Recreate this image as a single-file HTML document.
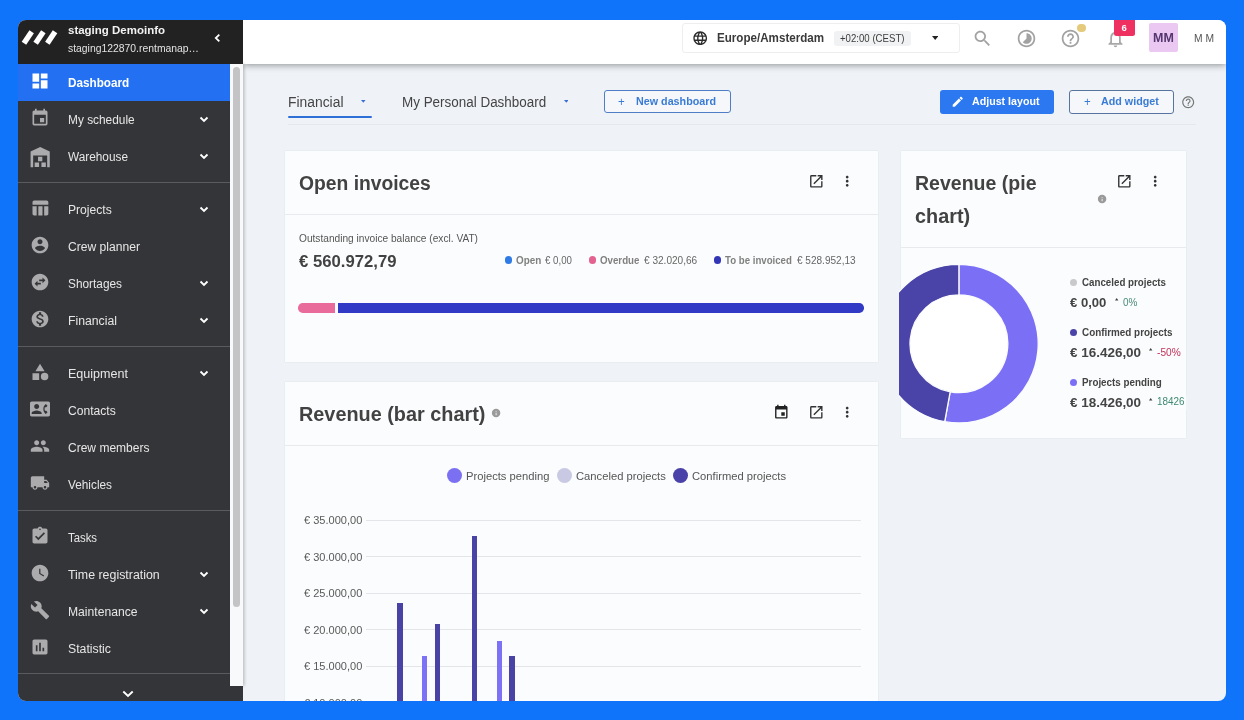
<!DOCTYPE html>
<html>
<head>
<meta charset="utf-8">
<style>
*{box-sizing:border-box;margin:0;padding:0}
html,body{width:1244px;height:720px;overflow:hidden}
body{background:#0f74fa;font-family:"Liberation Sans",sans-serif;position:relative;color:#333}
#win{position:absolute;left:18px;top:19.8px;width:1208px;height:681px;border-radius:8px;overflow:hidden;background:#eff3f7}
#pg{will-change:transform;position:absolute;left:-18px;top:-19.8px;width:1244px;height:720px}
.abs{position:absolute}
.t{position:absolute;white-space:nowrap;line-height:1;transform-origin:0 50%;transform:scaleX(var(--k,1))}
/* sidebar */
#sb{position:absolute;left:18px;top:64px;width:211.5px;height:640px;background:#343538}
#sbh{position:absolute;left:18px;top:20px;width:225px;height:44px;background:#222222}
#sbf{position:absolute;left:18px;top:685.8px;width:225.3px;height:20px;background:#343538}
#track{position:absolute;left:229.5px;top:64px;width:13.8px;height:621.8px;background:#f7f9fb;box-shadow:1.5px 0 3px rgba(0,0,0,.22)}
#thumb{position:absolute;left:233.1px;top:66.8px;width:7.4px;height:540px;background:#c4c4c6;border-radius:4px}
.nav{position:absolute;left:18px;width:211.5px;height:37px}
.nav .t{left:50px;top:13px;font-size:12.3px;color:#e6e6e6}
.nav svg.ic{overflow:visible;position:absolute;left:11.6px;top:6.5px;width:20px;height:20px;fill:#ababad}
.nav svg.ch{position:absolute;left:180.9px;top:15.1px;width:10px;height:7px;fill:none;stroke:#fff;stroke-width:1.9}
.nav.act{background:#2371f2}
.nav.act .t{font-weight:bold;color:#fff}
.nav.act svg.ic{fill:#fff}
.div{position:absolute;left:18px;width:211.5px;height:1px;background:#5a5b5e}
/* topbar */
#tb{position:absolute;left:243px;top:20px;width:983px;height:44px;background:#fff;box-shadow:0 1px 7px rgba(0,0,0,.42)}
/* cards */
.card{position:absolute;background:#fbfcfd;box-shadow:0 0 2px rgba(0,0,0,.12)}
.hr{position:absolute;height:1px;background:#e6e8eb}
</style>
<style id="fit">
#n0{--k:0.9528}
#n1{--k:0.9660}
#n2{--k:0.9610}
#n3{--k:0.9849}
#n4{--k:0.9844}
#n5{--k:0.9632}
#n6{--k:0.9956}
#n7{--k:1.0205}
#n8{--k:0.9839}
#n9{--k:0.9777}
#n10{--k:0.9604}
#n11{--k:0.9225}
#n12{--k:1.0069}
#n13{--k:0.9869}
#n14{--k:0.9985}
#h1{--k:1.0442}
#h2{--k:0.9886}
#tz1{--k:0.9150}
#tz2{--k:0.9171}
#mm1{--k:0.9912}
#mm2{--k:0.9350}
#tab1{--k:0.9905}
#tab2{--k:0.9601}
#nd0{--k:0.9550}
#nd1{--k:0.9602}
#al{--k:0.9432}
#aw0{--k:0.9550}
#aw1{--k:0.9495}
#c1t{--k:0.9840}
#c1a{--k:0.9766}
#c1b{--k:0.9886}
#l1a{--k:0.9609}
#l1b{--k:0.9392}
#l2a{--k:0.9430}
#l2b{--k:0.9778}
#l3a{--k:0.9379}
#l3b{--k:0.9746}
#c2t{--k:1.0033}
#g1{--k:1.0007}
#g2{--k:1.0027}
#g3{--k:1.0022}
#y0{--k:0.9863}
#y1{--k:0.9863}
#y2{--k:0.9863}
#y3{--k:0.9863}
#y4{--k:0.9863}
#y5{--k:0.9863}
#c3t1{--k:0.9868}
#c3t2{--k:1.0024}
#p1a{--k:0.9384}
#p1b{--k:0.9926}
#p1c{--k:0.9963}
#p2a{--k:0.9500}
#p2b{--k:1.0205}
#p2c{--k:1.0146}
#p3a{--k:0.9455}
#p3b{--k:1.0205}
#p3c{--k:0.9888}
</style>
</head>
<body>
<div id="win"><div id="pg">
  <div id="main" class="abs" style="left:243px;top:64px;width:983px;height:640px">
  <!--MAIN-->
<span class="t" id="tab1" style="left:45.4px;top:31px;font-size:14px;color:#444;">Financial</span>
<svg class="abs" style="left:118.4px;top:36.45px;width:4.6px;height:2.7px" viewBox="0 0 4.6 2.7"><polygon points="0,0 4.6,0 2.3,2.7" fill="#3b6fd4"/></svg>
<div class="abs" style="left:45px;top:51.5px;width:84px;height:2px;background:#2f6fd8;border-radius:1px"></div>
<span class="t" id="tab2" style="left:158.8px;top:31px;font-size:14px;color:#444;">My Personal Dashboard</span>
<svg class="abs" style="left:320.7px;top:36.45px;width:4.6px;height:2.7px" viewBox="0 0 4.6 2.7"><polygon points="0,0 4.6,0 2.3,2.7" fill="#3b6fd4"/></svg>
<div class="abs" style="left:45px;top:60.3px;width:908px;height:1px;background:#e5e8ec"></div>
<div class="abs" style="left:361.4px;top:26px;width:126.2px;height:23.4px;border:1px solid #4f7ec6;border-radius:3px;background:#f5f7fa"></div>
<span class="t" id="nd0" style="left:375.3px;top:32px;font-size:12px;color:#3a7bd5;">+</span>
<span class="t" id="nd1" style="left:393.3px;top:32px;font-size:11.2px;color:#3a7bd5;font-weight:bold;">New dashboard</span>
<div class="abs" style="left:697.1px;top:25.5px;width:113.9px;height:24.3px;background:#2b78f0;border-radius:3px"></div>
<svg class="abs" style="left:708.25px;top:30.95px;width:13.5px;height:13.5px;fill:#fff" viewBox="0 0 24 24"><path d="M3 17.25V21h3.75L17.81 9.94l-3.75-3.75L3 17.25zM20.71 7.04c.39-.39.39-1.020 0-1.410l-2.340-2.340c-.390-.390-1.020-.390-1.410 0l-1.830 1.830 3.750 3.750 1.830-1.830z"/></svg>
<span class="t" id="al" style="left:729.1px;top:32px;font-size:11.3px;color:#fff;font-weight:bold;">Adjust layout</span>
<div class="abs" style="left:826.1px;top:25.5px;width:104.7px;height:24.3px;border:1px solid #56749e;border-radius:3px;background:#f5f7fa"></div>
<span class="t" id="aw0" style="left:840.6px;top:32px;font-size:12px;color:#3a7bd5;">+</span>
<span class="t" id="aw1" style="left:857.6px;top:32px;font-size:11.3px;color:#3a7bd5;font-weight:bold;">Add widget</span>
<svg class="abs" style="left:938.0px;top:30.6px;width:14.4px;height:14.4px;fill:#777" viewBox="0 0 24 24"><path d="M11 18h2v-2h-2v2zm1-16C6.48 2 2 6.48 2 12s4.48 10 10 10 10-4.48 10-10S17.52 2 12 2zm0 18c-4.41 0-8-3.59-8-8s3.59-8 8-8 8 3.59 8 8-3.59 8-8 8zm0-14c-2.21 0-4 1.79-4 4h2c0-1.1.9-2 2-2s2 .9 2 2c0 2-3 1.75-3 5h2c0-2.25 3-2.5 3-5 0-2.21-1.79-4-4-4z"/></svg>
<div class="abs" style="left:41.8px;top:86.5px;width:593.4px;height:211.6px;background:#fbfcfd;box-shadow:0 0 1.5px rgba(0,0,0,.1)"></div>
<div class="abs" style="left:42px;top:150px;width:593.2px;height:1px;background:#e8eaed"></div>
<span class="t" id="c1t" style="left:56px;top:110px;font-size:19.6px;color:#424242;font-weight:bold;">Open invoices</span>
<svg class="abs" style="left:565.0px;top:109.1px;width:16.6px;height:16.6px;fill:#333" viewBox="0 0 24 24"><path d="M19 19H5V5h7V3H5c-1.11 0-2 .9-2 2v14c0 1.1.89 2 2 2h14c1.1 0 2-.9 2-2v-7h-2v7zM14 3v2h3.59l-9.83 9.83 1.41 1.41L19 6.41V10h2V3h-7z"/></svg>
<svg class="abs" style="left:596.3px;top:109.3px;width:16.4px;height:16.4px;fill:#333" viewBox="0 0 24 24"><path d="M12 8c1.1 0 2-.9 2-2s-.9-2-2-2-2 .9-2 2 .9 2 2 2zm0 2c-1.1 0-2 .9-2 2s.9 2 2 2 2-.9 2-2-.9-2-2-2zm0 6c-1.1 0-2 .9-2 2s.9 2 2 2 2-.9 2-2-.9-2-2-2z"/></svg>
<span class="t" id="c1a" style="left:56px;top:170px;font-size:10.4px;color:#555;">Outstanding invoice balance (excl. VAT)</span>
<span class="t" id="c1b" style="left:56px;top:190px;font-size:16.9px;color:#424242;font-weight:bold;">€ 560.972,79</span>
<div class="abs" style="left:261.5px;top:192.4px;width:7.2px;height:7.2px;border-radius:50%;background:#2f7be6"></div>
<span class="t" id="l1a" style="left:272.5px;top:192px;font-size:10.3px;color:#808080;font-weight:bold;">Open</span>
<span class="t" id="l1b" style="left:302.4px;top:192px;font-size:10.3px;color:#666;">€ 0,00</span>
<div class="abs" style="left:345.5px;top:192.4px;width:7.2px;height:7.2px;border-radius:50%;background:#e3628f"></div>
<span class="t" id="l2a" style="left:356.8px;top:192px;font-size:10.3px;color:#808080;font-weight:bold;">Overdue</span>
<span class="t" id="l2b" style="left:401px;top:192px;font-size:10.3px;color:#666;">€ 32.020,66</span>
<div class="abs" style="left:470.8px;top:192.4px;width:7.2px;height:7.2px;border-radius:50%;background:#3235b5"></div>
<span class="t" id="l3a" style="left:482px;top:192px;font-size:10.3px;color:#808080;font-weight:bold;">To be invoiced</span>
<span class="t" id="l3b" style="left:553.8px;top:192px;font-size:10.3px;color:#666;">€ 528.952,13</span>
<div class="abs" style="left:55.1px;top:239.2px;width:36.8px;height:9.5px;background:#e96b9b;border-radius:4.75px 0 0 4.75px"></div>
<div class="abs" style="left:94.9px;top:239.2px;width:525.8px;height:9.5px;background:#303ac4;border-radius:0 4.75px 4.75px 0"></div>
<div class="abs" style="left:41.8px;top:317.6px;width:593.4px;height:330px;background:#fbfcfd;box-shadow:0 0 1.5px rgba(0,0,0,.1)"></div>
<div class="abs" style="left:42px;top:381.2px;width:593.2px;height:1px;background:#e8eaed"></div>
<span class="t" id="c2t" style="left:55.6px;top:341px;font-size:19.8px;color:#424242;font-weight:bold;">Revenue (bar chart)</span>
<svg class="abs" style="left:247.7px;top:344.1px;width:10.2px;height:10.2px;fill:#9a9a9a" viewBox="0 0 24 24"><path d="M12 2C6.48 2 2 6.48 2 12s4.48 10 10 10 10-4.48 10-10S17.52 2 12 2zm1 15h-2v-6h2v6zm0-8h-2V7h2v2z"/></svg>
<svg class="abs" style="left:529.5px;top:340.2px;width:16.6px;height:16.6px;fill:#222" viewBox="0 0 24 24"><path d="M17 12h-5v5h5v-5zM16 1v2H8V1H6v2H5c-1.11 0-1.99.9-1.99 2L3 19c0 1.1.89 2 2 2h14c1.1 0 2-.9 2-2V5c0-1.1-.9-2-2-2h-1V1h-2zm3 18H5V8h14v11z"/></svg>
<svg class="abs" style="left:564.9px;top:340.2px;width:16.6px;height:16.6px;fill:#333" viewBox="0 0 24 24"><path d="M19 19H5V5h7V3H5c-1.11 0-2 .9-2 2v14c0 1.1.89 2 2 2h14c1.1 0 2-.9 2-2v-7h-2v7zM14 3v2h3.59l-9.83 9.83 1.41 1.41L19 6.41V10h2V3h-7z"/></svg>
<svg class="abs" style="left:596.4px;top:340.4px;width:16.4px;height:16.4px;fill:#333" viewBox="0 0 24 24"><path d="M12 8c1.1 0 2-.9 2-2s-.9-2-2-2-2 .9-2 2 .9 2 2 2zm0 2c-1.1 0-2 .9-2 2s.9 2 2 2 2-.9 2-2-.9-2-2-2zm0 6c-1.1 0-2 .9-2 2s.9 2 2 2 2-.9 2-2-.9-2-2-2z"/></svg>
<div class="abs" style="left:204.0px;top:404.0px;width:15.4px;height:15.4px;border-radius:50%;background:#7b70f2"></div>
<span class="t" id="g1" style="left:222.9px;top:407px;font-size:11.2px;color:#555;">Projects pending</span>
<div class="abs" style="left:313.9px;top:404.0px;width:15.4px;height:15.4px;border-radius:50%;background:#c9c9e3"></div>
<span class="t" id="g2" style="left:332.7px;top:407px;font-size:11.2px;color:#555;">Canceled projects</span>
<div class="abs" style="left:430.1px;top:404.0px;width:15.4px;height:15.4px;border-radius:50%;background:#4a42a8"></div>
<span class="t" id="g3" style="left:449px;top:407px;font-size:11.2px;color:#555;">Confirmed projects</span>
<div class="abs" style="left:123.4px;top:455.9px;width:495px;height:1px;background:#e4e5e9"></div>
<span class="t" id="y0" style="left:60.7px;top:451px;font-size:11.2px;color:#5a5a5a;">€ 35.000,00</span>
<div class="abs" style="left:123.4px;top:492.4px;width:495px;height:1px;background:#e4e5e9"></div>
<span class="t" id="y1" style="left:60.7px;top:488px;font-size:11.2px;color:#5a5a5a;">€ 30.000,00</span>
<div class="abs" style="left:123.4px;top:528.9px;width:495px;height:1px;background:#e4e5e9"></div>
<span class="t" id="y2" style="left:60.7px;top:524px;font-size:11.2px;color:#5a5a5a;">€ 25.000,00</span>
<div class="abs" style="left:123.4px;top:565.4px;width:495px;height:1px;background:#e4e5e9"></div>
<span class="t" id="y3" style="left:60.7px;top:561px;font-size:11.2px;color:#5a5a5a;">€ 20.000,00</span>
<div class="abs" style="left:123.4px;top:601.9px;width:495px;height:1px;background:#e4e5e9"></div>
<span class="t" id="y4" style="left:60.7px;top:597px;font-size:11.2px;color:#5a5a5a;">€ 15.000,00</span>
<div class="abs" style="left:123.4px;top:638.4px;width:495px;height:1px;background:#e4e5e9"></div>
<span class="t" id="y5" style="left:60.7px;top:634px;font-size:11.2px;color:#5a5a5a;">€ 10.000,00</span>
<div class="abs" style="left:154.3px;top:538.6px;width:5.4px;height:117.39999999999998px;background:#4a43a6"></div>
<div class="abs" style="left:179.1px;top:592px;width:5.4px;height:64px;background:#7d72f5"></div>
<div class="abs" style="left:191.7px;top:559.6px;width:5.4px;height:96.39999999999998px;background:#4a43a6"></div>
<div class="abs" style="left:228.9px;top:471.9px;width:5.4px;height:184.10000000000002px;background:#4a43a6"></div>
<div class="abs" style="left:254px;top:577.4px;width:5.4px;height:78.60000000000002px;background:#7d72f5"></div>
<div class="abs" style="left:266.3px;top:592px;width:5.4px;height:64px;background:#4a43a6"></div>
<div class="abs" style="left:657.5px;top:86.5px;width:285.2px;height:287.6px;background:#fbfcfd;box-shadow:0 0 1.500px rgba(0,0,0,.1)"></div>
<div class="abs" style="left:656.2px;top:184px;width:200px;height:189px;overflow:hidden">
<svg class="abs" style="left:0;top:0;width:200px;height:189px" viewBox="0 0 200 189"><circle cx="59.89999999999998" cy="95.69999999999999" r="48.9" fill="#fff"/><path d="M59.90 16.40A79.3 79.3 0 1 1 45.72 173.72L51.16 143.81A48.9 48.9 0 1 0 59.90 46.80Z" fill="#7b70f5" stroke="#fbfcfd" stroke-width="1.3"/><path d="M45.72 173.72A79.3 79.3 0 0 1 59.90 16.40L59.90 46.80A48.9 48.9 0 0 0 51.16 143.81Z" fill="#4a43a8" stroke="#fbfcfd" stroke-width="1.3"/></svg>
</div>
<div class="abs" style="left:657.5px;top:182.6px;width:285.2px;height:1px;background:#e8eaed"></div>
<span class="t" id="c3t1" style="left:671.5px;top:110px;font-size:19.8px;color:#424242;font-weight:bold;">Revenue (pie</span>
<span class="t" id="c3t2" style="left:671.5px;top:143px;font-size:19.8px;color:#424242;font-weight:bold;">chart)</span>
<svg class="abs" style="left:853.8px;top:130.4px;width:10.2px;height:10.2px;fill:#9a9a9a" viewBox="0 0 24 24"><path d="M12 2C6.48 2 2 6.48 2 12s4.48 10 10 10 10-4.48 10-10S17.52 2 12 2zm1 15h-2v-6h2v6zm0-8h-2V7h2v2z"/></svg>
<svg class="abs" style="left:872.6px;top:109.3px;width:16.6px;height:16.6px;fill:#333" viewBox="0 0 24 24"><path d="M19 19H5V5h7V3H5c-1.11 0-2 .9-2 2v14c0 1.1.89 2 2 2h14c1.1 0 2-.9 2-2v-7h-2v7zM14 3v2h3.59l-9.83 9.83 1.41 1.41L19 6.41V10h2V3h-7z"/></svg>
<svg class="abs" style="left:903.7px;top:109.4px;width:16.4px;height:16.4px;fill:#333" viewBox="0 0 24 24"><path d="M12 8c1.1 0 2-.9 2-2s-.9-2-2-2-2 .9-2 2 .9 2 2 2zm0 2c-1.1 0-2 .9-2 2s.9 2 2 2 2-.9 2-2-.9-2-2-2zm0 6c-1.1 0-2 .9-2 2s.9 2 2 2 2-.9 2-2-.9-2-2-2z"/></svg>
<div class="abs" style="left:827.1px;top:214.7px;width:7px;height:7px;border-radius:50%;background:#c9c9cd"></div>
<span class="t" id="p1a" style="left:838.5px;top:214px;font-size:10.4px;color:#444;font-weight:bold;">Canceled projects</span>
<span class="t" id="p1b" style="left:827.3px;top:232px;font-size:13.2px;color:#444;font-weight:bold;">€ 0,00</span>
<svg class="abs" style="left:872.2px;top:234.4px;width:3.4px;height:2.4px" viewBox="0 0 3.4 2.4"><polygon points="0,2.4 3.4,2.4 1.7,0" fill="#444"/></svg>
<span class="t" id="p1c" style="left:879.5px;top:234px;font-size:10px;color:#4a8a78;">0%</span>
<div class="abs" style="left:827.1px;top:264.9px;width:7px;height:7px;border-radius:50%;background:#4a43a8"></div>
<span class="t" id="p2a" style="left:838.5px;top:264px;font-size:10.4px;color:#444;font-weight:bold;">Confirmed projects</span>
<span class="t" id="p2b" style="left:827.3px;top:282px;font-size:13.2px;color:#444;font-weight:bold;">€ 16.426,00</span>
<svg class="abs" style="left:906.2px;top:284.4px;width:3.4px;height:2.4px" viewBox="0 0 3.4 2.4"><polygon points="0,2.4 3.4,2.4 1.7,0" fill="#444"/></svg>
<span class="t" id="p2c" style="left:913.9px;top:284px;font-size:10px;color:#c0335a;">-50%</span>
<div class="abs" style="left:827.1px;top:314.9px;width:7px;height:7px;border-radius:50%;background:#7b70f5"></div>
<span class="t" id="p3a" style="left:838.5px;top:314px;font-size:10.4px;color:#444;font-weight:bold;">Projects pending</span>
<span class="t" id="p3b" style="left:827.3px;top:332px;font-size:13.2px;color:#444;font-weight:bold;">€ 18.426,00</span>
<svg class="abs" style="left:906.2px;top:334.4px;width:3.4px;height:2.4px" viewBox="0 0 3.4 2.4"><polygon points="0,2.4 3.4,2.4 1.7,0" fill="#444"/></svg>
<span class="t" id="p3c" style="left:914.4px;top:333px;font-size:10px;color:#3d8a70;clip-path:inset(0 0 0 0)">18426</span>
<div class="abs" style="left:942.7px;top:331px;width:12px;height:15px;background:#eff3f7"></div>
<!--/MAIN-->
  </div>
  <div id="tb">
  <!--TOPBAR-->
<div class="abs" style="left:439px;top:2.7px;width:277.5px;height:30.5px;border:1px solid #eeeeee;border-radius:3px;background:#fff"></div>
<svg class="abs" style="left:449.2px;top:9.8px;width:16.4px;height:16.4px;fill:#2b2b2b" viewBox="0 0 24 24"><path d="M11.99 2C6.47 2 2 6.48 2 12s4.47 10 9.99 10C17.52 22 22 17.52 22 12S17.52 2 11.99 2zm6.93 6h-2.95c-.32-1.25-.78-2.45-1.38-3.56 1.84.63 3.37 1.91 4.33 3.56zM12 4.04c.83 1.2 1.48 2.53 1.91 3.96h-3.82c.43-1.43 1.08-2.76 1.91-3.96zM4.26 14C4.1 13.36 4 12.69 4 12s.1-1.36.26-2h3.38c-.08.66-.14 1.32-.14 2 0 .68.06 1.34.14 2H4.26zm.82 2h2.95c.32 1.25.78 2.45 1.38 3.56-1.84-.63-3.37-1.9-4.33-3.56zm2.95-8H5.08c.96-1.66 2.49-2.93 4.33-3.56C8.81 5.55 8.35 6.75 8.03 8zM12 19.96c-.83-1.2-1.48-2.53-1.91-3.96h3.82c-.43 1.43-1.08 2.76-1.91 3.96zM14.34 14H9.66c-.09-.66-.16-1.32-.16-2 0-.68.07-1.35.16-2h4.68c.09.65.16 1.32.16 2 0 .68-.07 1.34-.16 2zm.25 5.56c.6-1.11 1.06-2.31 1.38-3.56h2.95c-.96 1.65-2.49 2.93-4.33 3.56zM16.36 14c.08-.66.14-1.32.14-2 0-.68-.06-1.34-.14-2h3.380c.160.640.260 1.310.260 2s-.100 1.360-.260 2h-3.380z"/></svg>
<span class="t" id="tz1" style="left:473.5px;top:12px;font-size:12.7px;color:#3a3a3a;font-weight:bold;">Europe/Amsterdam</span>
<div class="abs" style="left:591px;top:10.7px;width:77px;height:15.6px;background:#f1f2f3;border-radius:3px"></div>
<span class="t" id="tz2" style="left:596.5px;top:13px;font-size:10.5px;color:#3c3c3c;">+02:00 (CEST)</span>
<svg class="abs" style="left:689px;top:16.3px;width:6.4px;height:4px" viewBox="0 0 8 5"><path d="M0 0h8L4 5z" fill="#222"/></svg>
<svg class="abs" style="left:728.5px;top:7.5px;width:21px;height:21px;fill:#a2a2a2" viewBox="0 0 24 24"><path d="M15.5 14h-.79l-.28-.27C15.41 12.59 16 11.11 16 9.5 16 5.91 13.09 3 9.5 3S3 5.91 3 9.5 5.91 16 9.5 16c1.61 0 3.09-.59 4.23-1.57l.27.28v.79l5 4.99L20.49 19l-4.99-5zm-6 0C7.01 14 5 11.99 5 9.5S7.01 5 9.5 5 14 7.01 14 9.5 11.99 14 9.5 14z"/></svg>
<svg class="abs" style="left:772.5px;top:7.5px;width:21px;height:21px;fill:#a2a2a2" viewBox="0 0 24 24"><path d="M16.24 7.76C15.07 6.59 13.54 6 12 6v6l-4.24 4.24c2.34 2.34 6.14 2.34 8.49 0 2.34-2.34 2.34-6.14-.01-8.48zM12 2C6.48 2 2 6.48 2 12s4.48 10 10 10 10-4.48 10-10S17.52 2 12 2zm0 18c-4.42 0-8-3.58-8-8s3.58-8 8-8 8 3.58 8 8-3.58 8-8 8z"/></svg>
<svg class="abs" style="left:817.1px;top:7.5px;width:21px;height:21px;fill:#a2a2a2" viewBox="0 0 24 24"><path d="M11 18h2v-2h-2v2zm1-16C6.48 2 2 6.48 2 12s4.48 10 10 10 10-4.48 10-10S17.52 2 12 2zm0 18c-4.41 0-8-3.59-8-8s3.59-8 8-8 8 3.59 8 8-3.59 8-8 8zm0-14c-2.21 0-4 1.79-4 4h2c0-1.1.9-2 2-2s2 .9 2 2c0 2-3 1.75-3 5h2c0-2.25 3-2.5 3-5 0-2.21-1.79-4-4-4z"/></svg>
<div class="abs" style="left:834.3px;top:3.9px;width:8.4px;height:8.4px;border-radius:50%;background:#e5ca7c"></div>
<svg class="abs" style="left:861.5px;top:7.5px;width:21px;height:21px;fill:#a8a8a8" viewBox="0 0 24 24"><path d="M12 22c1.1 0 2-.9 2-2h-4c0 1.1.9 2 2 2zm6-6v-5c0-3.07-1.63-5.64-4.5-6.32V4c0-.83-.67-1.5-1.5-1.5s-1.5.67-1.5 1.5v.68C7.64 5.36 6 7.92 6 11v5l-2 2v1h16v-1l-2-2zm-2 1H8v-6c0-2.48 1.51-4.5 4-4.5s4 2.02 4 4.5v6z"/></svg>
<div class="abs" style="left:871.2px;top:-2px;width:20.5px;height:18px;border-radius:2.5px;background:#ee3161"></div>
<span class="t" id="bdg" style="left:878.6px;top:3px;font-size:9.5px;color:#fff;font-weight:bold;">6</span>
<div class="abs" style="left:906px;top:3px;width:29px;height:29px;border-radius:2px;background:#ebc8f1"></div>
<span class="t" id="mm1" style="left:910px;top:12px;font-size:12.6px;color:#53366f;font-weight:bold;">MM</span>
<span class="t" id="mm2" style="left:950.8px;top:13px;font-size:11px;color:#555;">M M</span>
<!--/TOPBAR-->
  </div>
  <div id="sb"></div>
  <div id="track"></div><div id="thumb"></div>
  <!--NAV-->
<div class="nav act" style="top:64px"><svg class="ic" viewBox="0 0 24 24"><path d="M3 13h8V3H3v10zm0 8h8v-6H3v6zm10 0h8V11h-8v10zm0-18v6h8V3h-8z"/></svg><span class="t" id="n0">Dashboard</span></div>
<div class="nav" style="top:101px"><svg class="ic" viewBox="0 0 24 24"><path d="M17 12h-5v5h5v-5zM16 1v2H8V1H6v2H5c-1.11 0-1.99.9-1.99 2L3 19c0 1.1.89 2 2 2h14c1.1 0 2-.9 2-2V5c0-1.1-.9-2-2-2h-1V1h-2zm3 18H5V8h14v11z"/></svg><span class="t" id="n1">My schedule</span><svg class="ch" viewBox="0 0 10 7"><path d="M1.500 1.500l3.500 3.400 3.500-3.400"/></svg></div>
<div class="nav" style="top:138px"><svg class="ic" viewBox="0 0 24 24"><path d="M0.700 26.600V7.900L12.200 2.400 23.700 7.900V26.600H20.600V12.500H3.800V26.600zM9.600 14.200h5.200v5.300H9.600zM5.600 21.100h5.300v5.300H5.600zM13.700 21.100h5.300v5.300h-5.300z"/></svg><span class="t" id="n2">Warehouse</span><svg class="ch" viewBox="0 0 10 7"><path d="M1.500 1.500l3.500 3.400 3.500-3.400"/></svg></div>
<div class="nav" style="top:191px"><svg class="ic" viewBox="0 0 24 24"><path d="M10 10.020h5V21h-5zM17 21h3c1.100 0 2-.900 2-2v-9h-5v11zm3-18H5c-1.100 0-2 .900-2 2v3h19V5c0-1.100-.900-2-2-2zM3 19c0 1.100.900 2 2 2h3V10H3v9z"/></svg><span class="t" id="n3">Projects</span><svg class="ch" viewBox="0 0 10 7"><path d="M1.500 1.500l3.500 3.400 3.500-3.400"/></svg></div>
<div class="nav" style="top:228px"><svg class="ic" viewBox="0 0 24 24"><path d="M12 2C6.48 2 2 6.48 2 12s4.48 10 10 10 10-4.48 10-10S17.52 2 12 2zm0 3c1.66 0 3 1.34 3 3s-1.34 3-3 3-3-1.34-3-3 1.34-3 3-3zm0 14.2c-2.5 0-4.71-1.28-6-3.22.03-1.99 4-3.08 6-3.08 1.99 0 5.970 1.090 6 3.080-1.290 1.940-3.500 3.220-6 3.220z"/></svg><span class="t" id="n4">Crew planner</span></div>
<div class="nav" style="top:265px"><svg class="ic" viewBox="0 0 24 24"><path d="M22 12c0-5.520-4.480-10-10-10S2 6.480 2 12s4.480 10 10 10 10-4.480 10-10zm-7-5.500l3.500 3.500-3.500 3.500V11h-4V9h4V6.500zm-6 11L5.500 14 9 10.500V13h4v2H9v2.500z"/></svg><span class="t" id="n5">Shortages</span><svg class="ch" viewBox="0 0 10 7"><path d="M1.500 1.500l3.500 3.400 3.500-3.400"/></svg></div>
<div class="nav" style="top:302px"><svg class="ic" viewBox="0 0 24 24"><path d="M12 2C6.48 2 2 6.48 2 12s4.48 10 10 10 10-4.48 10-10S17.52 2 12 2zm1.41 16.09V20h-2.67v-1.93c-1.71-.36-3.16-1.46-3.27-3.4h1.96c.1 1.05.82 1.87 2.65 1.87 1.96 0 2.4-.98 2.4-1.59 0-.83-.44-1.61-2.67-2.14-2.48-.6-4.18-1.62-4.18-3.67 0-1.72 1.39-2.84 3.11-3.21V4h2.67v1.95c1.86.45 2.79 1.86 2.85 3.39H14.3c-.05-1.11-.64-1.87-2.22-1.87-1.5 0-2.4.68-2.4 1.64 0 .84.65 1.39 2.67 1.91s4.18 1.39 4.18 3.91c-.01 1.83-1.38 2.83-3.12 3.16z"/></svg><span class="t" id="n6">Financial</span><svg class="ch" viewBox="0 0 10 7"><path d="M1.500 1.500l3.500 3.400 3.500-3.400"/></svg></div>
<div class="nav" style="top:355px"><svg class="ic" viewBox="0 0 24 24"><path d="M12 2l-5.500 9h11zM17.500 13a4.500 4.500 0 1 0 0 9 4.500 4.500 0 0 0 0-9zM3 13.500h8v8H3z"/></svg><span class="t" id="n7">Equipment</span><svg class="ch" viewBox="0 0 10 7"><path d="M1.500 1.500l3.500 3.400 3.500-3.400"/></svg></div>
<div class="nav" style="top:392px"><svg class="ic" viewBox="0 0 24 24"><path d="M22 3H2C.9 3 0 3.900 0 5v14c0 1.100.900 2 2 2h20c1.100 0 1.990-.900 1.990-2L24 5c0-1.100-.900-2-2-2zM8 6c1.660 0 3 1.340 3 3s-1.340 3-3 3-3-1.340-3-3 1.340-3 3-3zm6 12H2v-1c0-2 4-3.100 6-3.100s6 1.100 6 3.100v1zm3.850-4h1.640L21 16l-1.990 1.990c-1.310-.980-2.280-2.380-2.730-3.990-.180-.640-.280-1.310-.280-2s.100-1.360.280-2c.450-1.620 1.420-3.010 2.730-3.990L21 8l-1.510 2h-1.640c-.220.630-.350 1.300-.350 2s.130 1.370.350 2z"/></svg><span class="t" id="n8">Contacts</span></div>
<div class="nav" style="top:429px"><svg class="ic" viewBox="0 0 24 24"><path d="M16 11c1.660 0 2.990-1.340 2.990-3S17.660 5 16 5c-1.660 0-3 1.340-3 3s1.340 3 3 3zm-8 0c1.660 0 2.990-1.340 2.990-3S9.660 5 8 5C6.340 5 5 6.340 5 8s1.340 3 3 3zm0 2c-2.330 0-7 1.170-7 3.500V19h14v-2.500c0-2.330-4.670-3.500-7-3.500zm8 0c-.290 0-.620.020-.970.050 1.160.840 1.970 1.970 1.970 3.450V19h6v-2.500c0-2.330-4.670-3.500-7-3.500z"/></svg><span class="t" id="n9">Crew members</span></div>
<div class="nav" style="top:466px"><svg class="ic" viewBox="0 0 24 24"><path d="M20 8h-3V4H3c-1.100 0-2 .900-2 2v11h2c0 1.660 1.340 3 3 3s3-1.340 3-3h6c0 1.660 1.340 3 3 3s3-1.340 3-3h2v-5l-3-4zM6 18.500c-.830 0-1.500-.670-1.500-1.500s.670-1.500 1.500-1.500 1.500.670 1.500 1.500-.670 1.500-1.500 1.500zm13.500-9l1.960 2.500H17V9.500h2.500zm-1.500 9c-.830 0-1.500-.670-1.500-1.500s.670-1.500 1.500-1.500 1.500.670 1.500 1.500-.670 1.500-1.500 1.500z"/></svg><span class="t" id="n10">Vehicles</span></div>
<div class="nav" style="top:519px"><svg class="ic" viewBox="0 0 24 24"><path d="M19 3h-4.180C14.400 1.840 13.300 1 12 1c-1.300 0-2.400.840-2.820 2H5c-1.100 0-2 .900-2 2v14c0 1.100.900 2 2 2h14c1.100 0 2-.900 2-2V5c0-1.100-.900-2-2-2zm-7 0c.550 0 1 .450 1 1s-.450 1-1 1-1-.450-1-1 .450-1 1-1zm-2 14l-4-4 1.410-1.410L10 14.170l6.590-6.590L18 9l-8 8z"/></svg><span class="t" id="n11">Tasks</span></div>
<div class="nav" style="top:556px"><svg class="ic" viewBox="0 0 24 24"><path d="M12 2C6.500 2 2 6.500 2 12s4.500 10 10 10 10-4.500 10-10S17.500 2 12 2zm4.200 14.200L11 13V7h1.500v5.200l4.500 2.700-.800 1.300z"/></svg><span class="t" id="n12">Time registration</span><svg class="ch" viewBox="0 0 10 7"><path d="M1.500 1.500l3.500 3.400 3.500-3.400"/></svg></div>
<div class="nav" style="top:593px"><svg class="ic" viewBox="0 0 24 24"><path d="M22.700 19l-9.100-9.100c.900-2.300.400-5-1.500-6.900-2-2-5-2.400-7.400-1.300L9 6 6 9 1.600 4.700C.400 7.100.900 10.100 2.900 12.100c1.900 1.900 4.600 2.400 6.900 1.500l9.100 9.100c.400.400 1 .400 1.400 0l2.300-2.300c.500-.400.500-1.100.100-1.400z"/></svg><span class="t" id="n13">Maintenance</span><svg class="ch" viewBox="0 0 10 7"><path d="M1.500 1.500l3.500 3.400 3.500-3.400"/></svg></div>
<div class="nav" style="top:630px"><svg class="ic" viewBox="0 0 24 24"><path d="M19 3H5c-1.100 0-2 .900-2 2v14c0 1.100.900 2 2 2h14c1.100 0 2-.900 2-2V5c0-1.100-.900-2-2-2zM9 17H7v-7h2v7zm4 0h-2V7h2v10zm4 0h-2v-4h2v4z"/></svg><span class="t" id="n14">Statistic</span></div>
<div class="div" style="top:182.3px"></div>
<div class="div" style="top:346.3px"></div>
<div class="div" style="top:510.3px"></div>
<div class="div" style="top:673.3px"></div>
<!--/NAV-->
  <div id="sbh">
<!--SBH-->
<svg class="abs" style="left:0;top:0;width:60px;height:44px" viewBox="18 20 60 44"><g fill="#fff"><rect x="25.1" y="30.6" width="5.4" height="13.8" transform="rotate(34 27.8 37.500)"/><rect x="36.8" y="30.6" width="5.4" height="13.8" transform="rotate(34 39.5 37.500)"/><rect x="48.5" y="30.6" width="5.4" height="13.8" transform="rotate(34 51.2 37.500)"/></g></svg>
<span class="t" id="h1" style="left:50px;top:5px;font-size:11px;color:#f2f2f2;font-weight:bold;">staging Demoinfo</span>
<span class="t" id="h2" style="left:50px;top:23px;font-size:10.5px;color:#e2e2e2;">staging122870.rentmanap…</span>
<svg class="abs" style="left:195px;top:13px;width:9px;height:10px;fill:none;stroke:#fff;stroke-width:1.8" viewBox="0 0 9 10"><path d="M6.300 1.600L2.800 5l3.500 3.400"/></svg>
<!--/SBH-->
  </div>
  <div id="sbf">
  <svg class="abs" style="left:104.3px;top:4.4px;width:12px;height:8px;fill:none;stroke:#fff;stroke-width:1.900" viewBox="0 0 12 8"><path d="M1.300 1.500L6 6l4.700-4.500"/></svg>
  </div>
</div></div>
</body>
</html>
